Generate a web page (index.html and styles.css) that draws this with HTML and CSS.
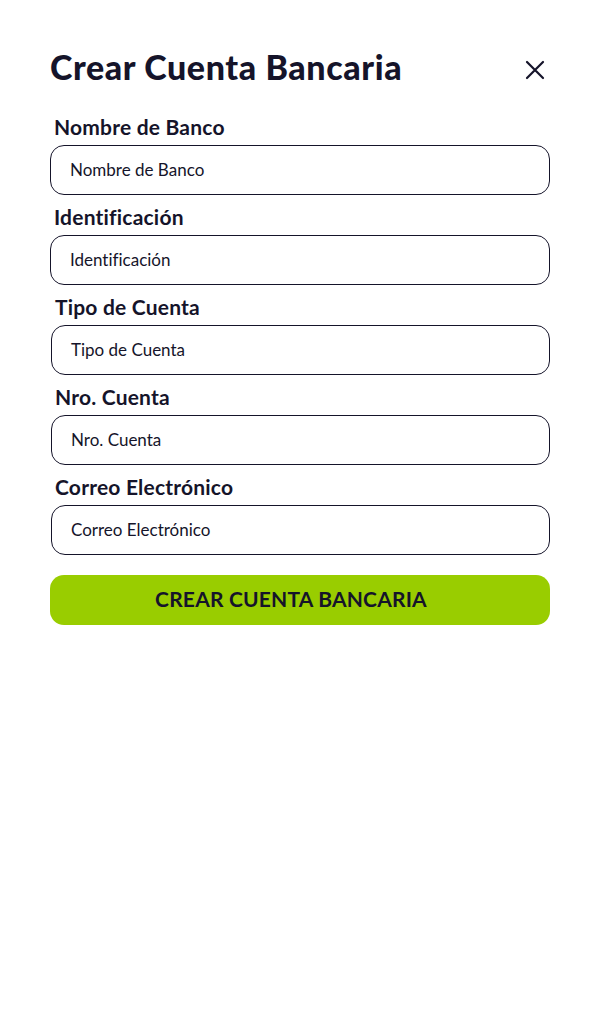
FILE: index.html
```html
<!DOCTYPE html>
<html lang="es">
<head>
<meta charset="utf-8">
<title>Crear Cuenta Bancaria</title>
<link rel="stylesheet" href="styles.css">
</head>
<body>
<main class="modal">
  <header class="modal-header">
    <h1 class="title">Crear Cuenta Bancaria</h1>
    <button class="close" aria-label="Cerrar">
      <svg width="20" height="20" viewBox="0 0 20 20"><path d="M2 2L18 18M18 2L2 18" stroke="#15142a" stroke-width="2.2" stroke-linecap="round"/></svg>
    </button>
  </header>
  <form class="form">
    <label class="field">
      <span class="label">Nombre de Banco</span>
      <span class="input">Nombre de Banco</span>
    </label>
    <label class="field">
      <span class="label">Identificación</span>
      <span class="input">Identificación</span>
    </label>
    <label class="field shifted">
      <span class="label">Tipo de Cuenta</span>
      <span class="input">Tipo de Cuenta</span>
    </label>
    <label class="field shifted">
      <span class="label">Nro. Cuenta</span>
      <span class="input">Nro. Cuenta</span>
    </label>
    <label class="field shifted">
      <span class="label">Correo Electrónico</span>
      <span class="input">Correo Electrónico</span>
    </label>
    <button type="button" class="submit">CREAR CUENTA BANCARIA</button>
  </form>
</main>
</body>
</html>
```

FILE: styles.css
```css
* { box-sizing: border-box; }
html, body { margin: 0; padding: 0; background: #fff; }
body {
  font-family: Lato, "Noto Sans", sans-serif;
  font-variant-ligatures: none;
  color: #15142a;
  width: 600px;
  height: 1024px;
}
.modal {
  padding: 50px 50px 0 50px;
}
.modal-header {
  display: flex;
  align-items: center;
  justify-content: space-between;
  height: 40px;
}
.title {
  margin: 0;
  font-size: 34px;
  font-weight: 900;
  letter-spacing: 0.6px;
  line-height: 34px;
  align-self: flex-start;
}
.close {
  border: 0;
  background: none;
  padding: 0;
  width: 20px;
  height: 20px;
  margin-right: 5px;
  display: flex;
}
.form {
  display: flex;
  flex-direction: column;
  margin-top: 15px;
}
.field {
  display: flex;
  flex-direction: column;
}
.label {
  font-size: 21px;
  font-weight: 700;
  letter-spacing: 0.2px;
  line-height: 26px;
  padding: 9px 0 5px 4px;
}
.input {
  height: 50px;
  border: 1px solid #15142a;
  border-radius: 14px;
  display: flex;
  align-items: center;
  padding: 0 0 1px 19px;
  font-size: 17px;
  font-weight: 400;
}
.shifted { padding-left: 1px; }
.submit {
  margin-top: 20px;
  height: 50px;
  border: 0;
  border-radius: 14px;
  background: #99cd00;
  color: #15142a;
  font-family: Lato, "Noto Sans", sans-serif;
  font-variant-ligatures: none;
  font-size: 21px;
  font-weight: 700;
  letter-spacing: 0.2px;
  padding: 0 18px 3px 0;
}
```
